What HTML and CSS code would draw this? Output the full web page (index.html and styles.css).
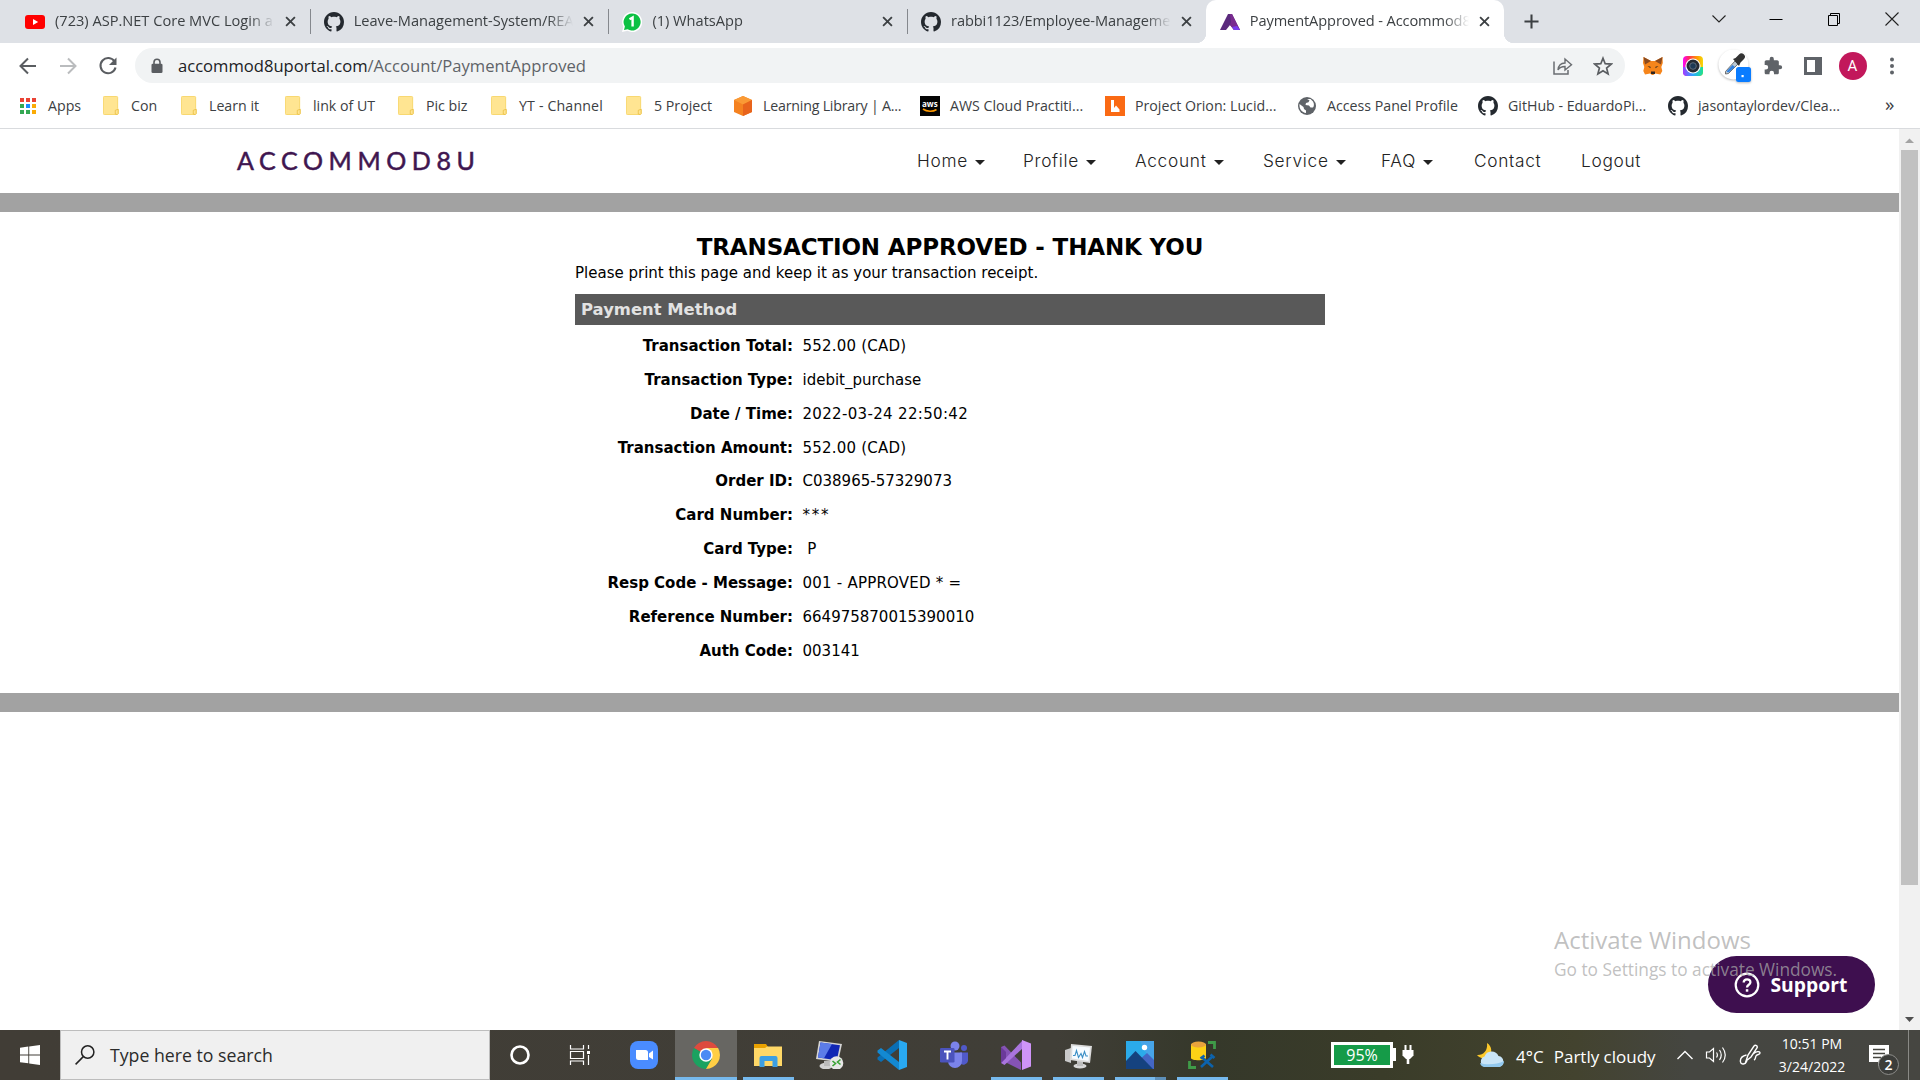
FILE: index.html
```html
<!DOCTYPE html>
<html lang="en">
<head>
<meta charset="utf-8">
<title>PaymentApproved - Accommod8u</title>
<link rel="stylesheet" href="styles.css">
</head>
<body>
<svg class="defs" aria-hidden="true">
  <symbol id="github" viewBox="0 0 16 16"><path fill="#24292f" d="M8 0C3.58 0 0 3.58 0 8c0 3.54 2.29 6.53 5.47 7.59.4.07.55-.17.55-.38 0-.19-.01-.82-.01-1.49-2.01.37-2.53-.49-2.69-.94-.09-.23-.48-.94-.82-1.13-.28-.15-.68-.52-.01-.53.63-.01 1.08.58 1.23.82.72 1.21 1.87.87 2.33.66.07-.52.28-.87.51-1.07-1.78-.2-3.64-.89-3.64-3.95 0-.87.31-1.59.82-2.15-.08-.2-.36-1.02.08-2.12 0 0 .67-.21 2.2.82.64-.18 1.32-.27 2-.27s1.36.09 2 .27c1.53-1.04 2.2-.82 2.2-.82.44 1.1.16 1.92.08 2.12.51.56.82 1.27.82 2.15 0 3.07-1.87 3.75-3.65 3.95.29.25.54.73.54 1.48 0 1.07-.01 1.93-.01 2.2 0 .21.15.46.55.38A8.01 8.01 0 0 0 16 8c0-4.42-3.58-8-8-8z"/></symbol>
  <symbol id="close" viewBox="0 0 12 12"><path d="M1.2 1.2l9.6 9.6M10.8 1.2L1.2 10.8" stroke="#3c4043" stroke-width="2" fill="none"/></symbol>
  <symbol id="folder" viewBox="0 0 16 20"><path d="M1 .5h13a1 1 0 0 1 1 1V13l.5 1v4.500a1 1 0 0 1-1 1H1a1 1 0 0 1-1-1V1.500a1 1 0 0 1 1-1z" fill="#ffe592" stroke="#f8d669"/><path d="M12.500 19v-4l3-1v4.500l-1 1z" fill="#ffe592" stroke="#e9bd3e" stroke-width=".8"/></symbol>
</svg>

<header class="tabs">
  <div class="tab">
    <svg class="fav" viewBox="0 0 20 20"><rect y="3" width="20" height="14" rx="3" fill="#f00"/><path d="M8 7l5.200 3L8 13z" fill="#fff"/></svg>
    <span class="tab-title">(723) ASP.NET Core MVC Login a</span><svg class="x"><use href="#close"/></svg>
  </div>
  <div class="tab">
    <svg class="fav"><use href="#github"/></svg>
    <span class="tab-title">Leave-Management-System/READ</span><svg class="x"><use href="#close"/></svg>
  </div>
  <div class="tab">
    <svg class="fav" viewBox="0 0 20 20"><path d="M10 0a10 10 0 1 1-4.600 18.800L0 20l1.300-5.200A10 10 0 0 1 10 0z" fill="#fff"/><path d="M10 1.500a8.500 8.500 0 1 1-4.400 15.700L2 18l.9-3.500A8.500 8.500 0 0 1 10 1.500z" fill="#0cc143"/><path d="M7.500 7.300L10.600 5.500v9" stroke="#fff" stroke-width="2.400" fill="none"/></svg>
    <span class="tab-title">(1) WhatsApp</span><svg class="x"><use href="#close"/></svg>
  </div>
  <div class="tab">
    <svg class="fav"><use href="#github"/></svg>
    <span class="tab-title tight">rabbi1123/Employee-Managemen</span><svg class="x"><use href="#close"/></svg>
  </div>
  <div class="tab active">
    <svg class="fav" viewBox="0 0 20 20"><path d="M8 2h4l8 16h-6l-4-5-4 5H0z" fill="#5b2a7d"/><path d="M10 2h2l8 16h-6l-4-5 1-3z" fill="#7a2b8f"/><path d="M14 18l-2-3 5-1 3 4z" fill="#7a3cf0"/></svg>
    <span class="tab-title tight">PaymentApproved - Accommod8</span><svg class="x"><use href="#close"/></svg>
  </div>
  <svg class="plus" viewBox="0 0 16 16"><path d="M8 .5v15M.5 8h15" stroke="#3c4043" stroke-width="2.200"/></svg>
  <div class="win">
    <svg viewBox="0 0 16 16"><path d="M1.500 4.500L8 11l6.500-6.500" stroke="#222" stroke-width="1.100" fill="none"/></svg>
    <svg viewBox="0 0 16 16"><path d="M1.500 8.500h13" stroke="#000"/></svg>
    <svg viewBox="0 0 16 16"><path d="M2.500 4.500h9v10h-9zM4.500 4.500v-2h9v10h-2" stroke="#000" fill="none"/></svg>
    <svg viewBox="0 0 16 16"><path d="M1.500 1.500l13 13M14.500 1.500l-13 13" stroke="#222" stroke-width="1.100"/></svg>
  </div>
</header>

<div class="toolbar">
  <svg class="nav-i" viewBox="0 0 20 20"><path d="M18 10H3M10 2.500L2.500 10l7.500 7.500" stroke="#5a5d61" stroke-width="2" fill="none"/></svg>
  <svg class="nav-i" viewBox="0 0 20 20"><path d="M2 10h15M10 2.500l7.500 7.500-7.500 7.500" stroke="#babcbe" stroke-width="2" fill="none"/></svg>
  <svg class="nav-i" viewBox="0 0 20 20"><path d="M16.500 5.500A7.600 7.600 0 1 0 17.500 11.500" stroke="#5a5d61" stroke-width="2.100" fill="none"/><path d="M18.500 1.500v7.500H11z" fill="#5a5d61"/></svg>
  <div class="omni">
    <svg class="lock" viewBox="0 0 12 16"><path d="M3 6V4.200a3 3 0 0 1 6 0V6" stroke="#5a5d61" stroke-width="1.600" fill="none"/><rect x=".5" y="5.800" width="11" height="9.200" rx="1.300" fill="#5a5d61"/></svg>
    <span class="url"><b>accommod8uportal.com</b>/Account/PaymentApproved</span>
    <svg class="omni-i" viewBox="0 0 20 20"><path d="M1 5.500V18h14v-4" stroke="#6a6d71" stroke-width="1.500" fill="none"/><path d="M5 14c.5-5 3-7 7-7V3l6.500 5.700L12 14v-3.500c-3 0-5.500.8-7 3.500z" fill="none" stroke="#6a6d71" stroke-width="1.400"/></svg>
    <svg class="omni-i" viewBox="0 0 20 20"><path d="M10 2.200l2.200 5.500 6 .4-4.600 3.900 1.500 5.900L10 14.700l-5.100 3.200L6.400 12 1.800 8.100l6-.4z" fill="none" stroke="#5a5d61" stroke-width="1.700"/></svg>
  </div>
  <div class="ext">
    <svg viewBox="0 0 20 20"><path d="M.5 1L8 5h4l7.500-4 .3 6-1.500 4 1 4-2 3.500-5-1-2 1.500H9l-2-1.500-5 1L.3 15l1-4L0 7z" fill="#f6851b"/><path d="M.5 1L8 5 2 8.500zM19.500 1L12 5l6 3.500z" fill="#8a4a20"/><path d="M4.500 10l3 .8v1.500zM15.500 10l-3 .8v1.500zM8 15.500h4V18H8z" fill="#30251f"/></svg>
    <svg viewBox="0 0 20 20"><defs><linearGradient id="cg" x2="1"><stop offset="0" stop-color="#f0f"/><stop offset=".3" stop-color="#ff2f55"/><stop offset=".7" stop-color="#ff9a00"/><stop offset="1" stop-color="#f5d90a"/></linearGradient><linearGradient id="cb" x2="1"><stop offset="0" stop-color="#a03cff"/><stop offset=".5" stop-color="#29a8ff"/><stop offset="1" stop-color="#1fe38c"/></linearGradient></defs><rect width="20" height="20" rx="4" fill="url(#cg)"/><path d="M0 11h20v5a4 4 0 0 1-4 4H4a4 4 0 0 1-4-4z" fill="url(#cb)"/><circle cx="10" cy="10" r="7.600" fill="#fff"/><circle cx="10" cy="10" r="6.500" fill="#262b33"/><circle cx="10" cy="10" r="3.300" fill="#1d3a55" stroke="#5d6b7a"/></svg>
    <svg class="drop" viewBox="0 0 34 34"><circle cx="15.500" cy="15.500" r="15" fill="#fff"/><path d="M7.500 22.500L17 12l3 3-9.500 9.500-3 .5z" fill="#b9c8d4" stroke="#555" stroke-width=".8"/><path d="M8.500 22.500l6-6.500 2.500 2-6.500 5.500z" fill="#2f80e0"/><path d="M15 10l2.500-1 3.500-3.500a3.300 3.300 0 0 1 5 4.500L22.500 13.500 21 17z" fill="#333"/><rect x="18" y="18" width="15" height="15" rx="2.500" fill="#0a7cff"/><rect x="23.500" y="26" width="2.200" height="2.200" fill="#fff"/></svg>
    <svg viewBox="0 0 24 24"><path fill="#5f6368" d="M20.500 11H19V7c0-1.100-.9-2-2-2h-4V3.500a2.500 2.500 0 0 0-5 0V5H4c-1.100 0-2 .9-2 2v3.800h1.500a2.700 2.700 0 0 1 0 5.400H2V20c0 1.100.9 2 2 2h3.800v-1.500a2.700 2.700 0 0 1 5.400 0V22H17c1.100 0 2-.9 2-2v-4h1.500a2.500 2.500 0 0 0 0-5z"/></svg>
    <svg viewBox="0 0 20 20"><path d="M1 1h18v18H1z" fill="#5f6368"/><path d="M4 4h8v12H4z" fill="#fff"/></svg>
    <span class="avatar">A</span>
    <svg class="dots" viewBox="0 0 20 20"><g fill="#5f6368"><circle cx="10" cy="3.500" r="2"/><circle cx="10" cy="10" r="2"/><circle cx="10" cy="16.500" r="2"/></g></svg>
  </div>
</div>

<nav class="marks">
  <span><svg class="apps" viewBox="0 0 16 16"><g fill="#ea4335"><path d="M0 0h4v4H0zM6 0h4v4H6zM12 0h4v4h-4z"/></g><path d="M0 6h4v4H0zM0 12h4v4H0zM6 12h4v4H6z" fill="#34a853"/><path d="M6 6h4v4H6z" fill="#1a8cff"/><path d="M12 6h4v4h-4zM12 12h4v4h-4z" fill="#fbab05"/></svg>Apps</span>
  <span><svg class="fold"><use href="#folder"/></svg>Con</span>
  <span><svg class="fold"><use href="#folder"/></svg>Learn it</span>
  <span><svg class="fold"><use href="#folder"/></svg>link of UT</span>
  <span><svg class="fold"><use href="#folder"/></svg>Pic biz</span>
  <span class="yt"><svg class="fold"><use href="#folder"/></svg>YT - Channel</span>
  <span><svg class="fold"><use href="#folder"/></svg>5 Project</span>
  <span class="lib"><svg viewBox="0 0 20 20"><path d="M10 0l9 4v12l-9 4-9-4V4z" fill="#f58220"/><path d="M10 0l9 4-9 4.500L1 4z" fill="#fa9a35"/><path d="M10 8.500L19 4v12l-9 4z" fill="#e8641c"/></svg>Learning Library | A...</span>
  <span><svg viewBox="0 0 20 20"><path d="M0 0h20v20H0z" fill="#050505"/><text x="2" y="10.500" class="aws">aws</text><path d="M3 13c4 3 10 3 13.500.5" stroke="#f90" stroke-width="1.600" fill="none"/></svg>AWS Cloud Practiti...</span>
  <span><svg viewBox="0 0 20 20"><path d="M0 0h20v20H0z" fill="#fa6a14"/><path d="M6 4v12h8.500v-2.500l-3.500-4L9 12V4z" fill="#fff"/></svg>Project Orion: Lucid...</span>
  <span><svg class="globe" viewBox="0 0 18 18"><circle cx="9" cy="9" r="9" fill="#5f6368"/><path d="M1.500 7l4 3 .5 2 2 1.500V16C4 15.500 1 12 1.500 7zM9 2l2.500 1.200-1 2L8 6l-.5 2 3.500.5 1.500 2H15c1-1 1.500-3.500 0-6L12.500 2z" fill="#fff"/></svg>Access Panel Profile</span>
  <span><svg><use href="#github"/></svg>GitHub - EduardoPi...</span>
  <span><svg><use href="#github"/></svg>jasontaylordev/Clea...</span>
  <span class="more">»</span>
</nav>

<div class="viewport">
  <main class="page">
    <div class="site-nav">
      <div class="logo">ACCOMMOD8U</div>
      <ul class="menu">
        <li class="dd">Home</li><li class="dd">Profile</li><li class="dd">Account</li><li class="dd">Service</li><li class="dd">FAQ</li><li>Contact</li><li>Logout</li>
      </ul>
    </div>
    <div class="band"></div>
    <section class="receipt">
      <h1>TRANSACTION APPROVED - THANK YOU</h1>
      <p>Please print this page and keep it as your transaction receipt.</p>
      <h2>Payment Method</h2>
      <dl>
        <dt>Transaction Total:</dt><dd class="wide">552.00 (CAD)</dd>
        <dt>Transaction Type:</dt><dd>idebit_purchase</dd>
        <dt>Date / Time:</dt><dd class="date">2022-03-24 22:50:42</dd>
        <dt>Transaction Amount:</dt><dd class="wide">552.00 (CAD)</dd>
        <dt>Order ID:</dt><dd>C038965-57329073</dd>
        <dt>Card Number:</dt><dd class="stars">***</dd>
        <dt>Card Type:</dt><dd>&nbsp;P</dd>
        <dt>Resp Code - Message:</dt><dd class="wide">001 - APPROVED * =</dd>
        <dt>Reference Number:</dt><dd>664975870015390010</dd>
        <dt>Auth Code:</dt><dd>003141</dd>
      </dl>
    </section>
    <div class="band"></div>
  </main>
  <div class="scroll">
    <svg viewBox="0 0 21 21"><path d="M6 14l4.500-4.500L15 14z" fill="#a3a3a3"/></svg>
    <div class="thumb"></div>
    <svg viewBox="0 0 21 21"><path d="M6 8h9l-4.500 5z" fill="#505050"/></svg>
  </div>
  <div class="support">
    <svg viewBox="0 0 26 26"><circle cx="13" cy="13" r="11.300" fill="none" stroke="#fff" stroke-width="2.200"/><path d="M9.700 10.500c0-4.200 6.700-4.200 6.700-.3 0 2.600-3.400 2.500-3.400 5.300" fill="none" stroke="#fff" stroke-width="2.300"/><rect x="11.800" y="17.200" width="2.500" height="2.500" fill="#fff"/></svg>
    Support
  </div>
  <div class="watermark"><div>Activate Windows</div><p>Go to Settings to activate Windows.</p></div>
</div>

<footer class="taskbar">
  <div class="start"><svg viewBox="0 0 20 20"><path d="M0 2.800L8.300 1.600v7.900H0zM9.200 1.500L20 0v9.500H9.200zM0 10.400h8.300v7.900L0 17.200zM9.200 10.400H20V20L9.200 18.500z" fill="#fff"/></svg></div>
  <div class="search"><svg viewBox="0 0 20 20"><circle cx="12.700" cy="7" r="6.200" fill="none" stroke="#222" stroke-width="1.500"/><path d="M8.300 11.600L.6 19.400" stroke="#222" stroke-width="1.500"/></svg>Type here to search</div>
  <div class="sys">
    <svg viewBox="0 0 28 28"><circle cx="14" cy="14" r="8.500" fill="none" stroke="#fff" stroke-width="2.600"/></svg>
    <svg viewBox="0 0 28 28"><path d="M4.500 4v4h13V4M4.500 24v-4h13v4M4.500 10.500h13v7h-13z" fill="none" stroke="#fff" stroke-width="1.200"/><path d="M22.500 4v4M22.500 14v10" stroke="#fff" stroke-width="1.200"/><path d="M21 10h3v3h-3z" fill="#fff"/></svg>
  </div>
  <div class="apps-row">
    <div><svg viewBox="0 0 28 28"><rect width="28" height="28" rx="8" fill="#4a8cff"/><path d="M6 9h9.500a2.500 2.500 0 0 1 2.500 2.500V19H8.500A2.500 2.500 0 0 1 6 16.500zM19 12.500L23 9.500v9L19 16z" fill="#fff"/></svg></div>
    <div class="on focus"><svg viewBox="0 0 28 28"><path d="M14 14L1.900 7A14 14 0 0 1 26.100 7z" fill="#dd4b3e"/><path d="M14 14L1.900 7A14 14 0 0 0 14 28l6-10.500z" fill="#1ba260"/><path d="M14 7h12.100A14 14 0 0 1 14 28l6.100-10.500z" fill="#ffce44"/><circle cx="14" cy="14" r="6.700" fill="#fff"/><circle cx="14" cy="14" r="5.200" fill="#4a8af4"/></svg></div>
    <div class="on"><svg viewBox="0 0 28 28"><path d="M0 3h12l2 3v5H0z" fill="#e9a100"/><path d="M0 7h11l2-1.500h15V25H0z" fill="#ffd867"/><path d="M5.500 26V17a2 2 0 0 1 2-2h14a2 2 0 0 1 2 2v9h-5v-6h-8v6z" fill="#3c9fe3"/></svg></div>
    <div><svg viewBox="0 0 28 28"><ellipse cx="10" cy="25" rx="6.500" ry="3.300" fill="#d2d2d2"/><path d="M8 20h6v5H8z" fill="#bbb"/><path d="M3 0l23 3-4 18L0 18z" fill="#d5d5d5"/><path d="M4.500 1.500L24 4.200l-3.200 15L2 16.500z" fill="#1026b5"/><path d="M4.500 1.500L16 3 8 17.200l-6-.7z" fill="#5c7ce8"/><circle cx="20.500" cy="22" r="6.800" fill="#e7e7e7"/><path d="M16.500 20l3 2.500-3 2.500M24.500 18.500l-3 2.500 3 2.500" stroke="#3aa335" stroke-width="1.600" fill="none"/></svg></div>
    <div><svg class="big" viewBox="0 0 30 30"><path d="M22 0l8 3v24l-8 3z" fill="#29a9f2"/><path d="M22 0v8L4 22l-3.500-2.500v-2z" fill="#0a6fb5"/><path d="M22 30v-8L4 8 .5 10.500v2z" fill="#1389d2"/></svg></div>
    <div><svg viewBox="0 0 28 28"><circle cx="15" cy="5" r="4.500" fill="#7b83eb"/><circle cx="24" cy="7" r="3" fill="#5059c9"/><path d="M20 11.500h8V20a4.500 4.500 0 0 1-8 2z" fill="#5059c9"/><path d="M8 11.500h14V20a7 7 0 0 1-14 0z" fill="#7b83eb"/><rect y="7" width="14.500" height="14.500" rx="1.300" fill="#4b53bc"/><path d="M4 10.500h7M7.500 10.500v8" stroke="#fff" stroke-width="1.900"/></svg></div>
    <div class="on"><svg class="big" viewBox="0 0 30 30"><path d="M0 7l3.500-1.500L20 22.500V30L4 22 0 23z" fill="#8553b5"/><path d="M0 23l3.500 2L22 8V0z" fill="#a975dd"/><path d="M0 7v16l5-5v-6z" fill="#6b3a9a"/><path d="M21 0l9 3.500v23L21 30z" fill="#cf94f8"/></svg></div>
    <div class="on"><svg viewBox="0 0 28 28"><path d="M1 9l6-2v15l-6-2z" fill="#c9c9c9"/><ellipse cx="16" cy="25" rx="6.500" ry="2.500" fill="#d8d8d8"/><path d="M13 20h6v5h-6z" fill="#bdbdbd"/><path d="M7 3l21 2-2 17-20-3z" fill="#dcdcdc"/><path d="M8.500 5l17.500 1.500L24.500 20 8 17.500z" fill="#f6fbff"/><path d="M9 14.500h2l1.500-5 2 7 2.500-4 1.500 4 2-6 1.500 4.500h2" stroke="#3b8fc6" stroke-width="1.100" fill="none"/></svg></div>
    <div class="on multi"><svg viewBox="0 0 28 28"><path d="M0 0h28v28H0z" fill="#2babea"/><path d="M14 0h14v28z" fill="#5aa2e8" opacity=".6"/><path d="M12 20l9-8 7 7v9H12z" fill="#4466c4"/><path d="M0 20L9.500 10 27 28H0z" fill="#15427f"/><circle cx="18.500" cy="6.500" r="2.700" fill="#fff"/></svg></div>
    <div class="on"><svg viewBox="0 0 28 28"><path d="M3 3v14c0 3 15 3 15 0V3z" fill="#fcd116"/><ellipse cx="10.500" cy="3.500" rx="7.500" ry="3" fill="#e8a33d"/><path d="M20 1.500h6.500V8M1.500 20v6.500H8" stroke="#3f9b48" stroke-width="2.800" fill="none"/><path d="M13 26l12-11M14 16.500L25 26M12.500 17.500l4-3M22.500 13.500l4 3.500" stroke="#0c63ad" stroke-width="2.600" fill="none"/></svg></div>
  </div>
  <div class="tray">
    <span class="batt">95%</span>
    <svg class="plug" viewBox="0 0 12 22"><path d="M3.500 1v6M8.500 1v6" stroke="#fff" stroke-width="2"/><path d="M.5 6h11v5.500L8 15H4L.5 11.500z" fill="#fff"/><path d="M6 14v6" stroke="#fff" stroke-width="2.600"/></svg>
    <svg class="cloud" viewBox="0 0 28 26"><path d="M10 1c5 3 6 10 1 14-4 2.500-9 1-11-2 6 .5 11-4 10-12z" fill="#fdc92b"/><path d="M8 25a5.500 5.500 0 0 1-.5-10.500 7.500 7.500 0 0 1 14-.5A5.600 5.600 0 0 1 22 25z" fill="#c9e5f8"/><path d="M8 25a5.500 5.500 0 0 1-5-4c5 2 17 2 24-2a5.600 5.600 0 0 1-5 6z" fill="#93c9ee"/></svg>
    <span class="weather"><span>4°C</span><span>Partly cloudy</span></span>
    <svg class="up" viewBox="0 0 18 18"><path d="M1.500 13L9 5.500l7.500 7.500" stroke="#fff" stroke-width="1.400" fill="none"/></svg>
    <svg class="vol" viewBox="0 0 22 20"><path d="M1.500 7h3L8.500 3.500v13L4.500 13h-3z" fill="none" stroke="#fff" stroke-width="1.200"/><path d="M11.500 7.500q1.800 2.500 0 5M14.500 5q3.500 5 0 10M17.500 2.500q5.500 7.500 0 15" fill="none" stroke="#fff" stroke-width="1.200"/></svg>
    <svg class="pen" viewBox="0 0 22 22"><path d="M7 17L9 11l6-9c1.500-1.500 4 0 3 2l-6 9-5 4zM7.500 11C3 12 1 15 1.500 18s5 2.500 6.500-1M14 10c3-3 7-3 7-1s-3 1-4 3 0 3-2 4" fill="none" stroke="#fff" stroke-width="1.400"/></svg>
    <span class="clock">10:51 PM<br>3/24/2022</span>
    <svg class="note" viewBox="0 0 30 34"><path d="M0 2h20v17h-7l-4 4v-4H0z" fill="#fff"/><path d="M4 6.500h12M4 10.500h12M4 14.500h8" stroke="#45453f" stroke-width="1.300"/><circle cx="19.500" cy="21.500" r="10" fill="#3c3d3a" stroke="#8d8d8a"/><text x="15.500" y="26.500">2</text></svg>
  </div>
</footer>
</body>
</html>
```
FILE: styles.css
```css
* { box-sizing: border-box; margin: 0; padding: 0; }
body { width: 1920px; height: 1080px; overflow: hidden; display: flex; flex-direction: column; background: #fff; font-family: "Open Sans", sans-serif; color: #3c4043; }
svg { display: block; flex: none; }
.defs { display: none; }

/* tab strip */
.tabs { height: 43px; background: #dee1e6; display: flex; align-items: center; padding-left: 11px; }
.tab { width: 298.7px; height: 43px; padding: 0 14px; display: flex; align-items: center; font-size: 14.6px; position: relative; }
.tab:nth-child(-n+3)::after { content: ""; position: absolute; right: -1px; top: 9px; width: 1px; height: 25px; background: #85888d; }
.fav { width: 20px; height: 20px; margin-right: 10px; }
.tab-title { width: 220px; height: 26px; line-height: 22px; white-space: nowrap; overflow: hidden; -webkit-mask-image: linear-gradient(90deg, #000 194px, transparent); mask-image: linear-gradient(90deg, #000 194px, transparent); }
.tight { letter-spacing: -.1px; }
.x { width: 11px; height: 11px; margin-left: 10px; }
.active { background: #fff; border-radius: 10px 10px 0 0; }
.active::before { content: ""; position: absolute; left: -10px; bottom: 0; width: 10px; height: 10px; background: radial-gradient(circle at 0 0, transparent 10px, #fff 10.5px); }
.active::after { content: ""; position: absolute; right: -10px; bottom: 0; width: 10px; height: 10px; background: radial-gradient(circle at 100% 0, transparent 10px, #fff 10.5px); }
.plus { width: 15px; height: 15px; margin-left: 20px; }
.win { margin-left: auto; display: flex; gap: 41.6px; padding: 0 20.500px 6px 0; }
.win svg { width: 16px; height: 16px; }

/* toolbar */
.toolbar { height: 45px; display: flex; align-items: center; padding-left: 18px; }
.nav-i { width: 20px; height: 20px; margin-right: 20px; }
.omni { width: 1490px; height: 35px; margin-left: -3px; border-radius: 18px; background: #f1f3f4; display: flex; align-items: center; padding: 0 12px 0 16px; }
.lock { width: 12px; height: 16px; margin-right: 15px; }
.url { flex: 1; font-size: 16.6px; color: #5f6368; }
.url b { font-weight: 400; color: #202124; }
.omni-i { width: 20px; height: 20px; margin-left: 20px; }
.ext { display: flex; align-items: center; gap: 20px; padding-left: 17.500px; }
.ext svg { width: 20px; height: 20px; }
.ext .drop { width: 34px; height: 34px; margin: 0 -9px 0 -5px; filter: drop-shadow(0 1px 1px #0004); }
.ext .avatar { width: 28px; height: 28px; border-radius: 50%; background: #c2185b; color: #fff; font: 15px/28px Roboto, sans-serif; text-align: center; margin: 0 -4px 0 -4px; }
.ext .dots { margin-left: -1px; }

/* bookmarks */
.marks { height: 41px; border-bottom: 1px solid #d9dbde; padding: 0 0 5px 20px; display: grid; align-items: center; font-size: 14.2px; grid-template-columns: 83px 78px 104px 113px 93px 135px 107px 187px 185px 193px 180px 190px 215px auto; }
.marks span { display: flex; align-items: center; white-space: nowrap; }
.marks svg { width: 20px; height: 20px; margin-right: 10px; }
.marks .apps { width: 16px; height: 16px; margin-right: 12px; }
.marks .fold { width: 16px; height: 19px; margin-right: 12px; }
.marks .globe { width: 18px; height: 18px; margin-right: 11px; }
.marks .yt { letter-spacing: .15px; }
.marks .lib { letter-spacing: -.2px; }
.marks .more { font-size: 19px; padding: 0 0 3px 2px; }
.aws { font: 700 8px "Open Sans", sans-serif; fill: #fff; letter-spacing: 0; }

/* web page */
.viewport { height: 901px; display: flex; position: relative; }
.page { flex: 1; background: #fff; }
.site-nav { height: 64px; display: flex; padding-left: 237px; }
.logo { width: 680px; font: 25px/63px Lato, sans-serif; letter-spacing: 5.600px; color: #3f1650; -webkit-text-stroke: .5px #3f1650; }
.menu { list-style: none; display: grid; grid-template-columns: 106px 112px 128px 118px 93px 107px 80px; font: 300 17.300px/64px Inter, sans-serif; letter-spacing: .7px; color: #222; }
.dd::after { content: ""; display: inline-block; border: 5px solid transparent; border-top-color: #222; border-bottom: 0; margin-left: 7px; vertical-align: 2.500px; }
.band { height: 19px; background: #a2a2a2; }
.receipt { width: 750px; height: 481px; margin-left: 575px; padding-top: 21px; color: #000; font: 15px "DejaVu Sans", sans-serif; }
.receipt h1 { font-size: 23px; line-height: 28px; letter-spacing: -.14px; text-align: center; }
.receipt p { line-height: 25px; white-space: nowrap; }
.receipt h2 { margin: 8px 0; height: 31px; padding-left: 6px; background: #595959; color: #e2e2e2; font-size: 16.4px; line-height: 32px; }
.receipt dl { display: grid; grid-template-columns: 218px auto; column-gap: 9.500px; grid-auto-rows: 33.850px; line-height: 27px; }
.receipt dt { font-weight: 700; text-align: right; }
.receipt .date { letter-spacing: .33px; }
.receipt .wide { letter-spacing: .22px; }
.receipt .stars { letter-spacing: 1.700px; }
.scroll { width: 21px; background: #f1f1f1; display: flex; flex-direction: column; }
.scroll svg { width: 21px; height: 21px; }
.thumb { height: 735px; margin: 0 2px 124px; background: #c1c1c1; }
.support { position: absolute; left: 1708px; top: 827px; width: 167px; height: 57px; border-radius: 29px; background: #3e0f4f; color: #fff; font: 700 19.300px "Open Sans", sans-serif; display: flex; align-items: center; padding-left: 26px; gap: 10.500px; }
.support svg { width: 26px; height: 26px; }
.watermark { position: absolute; left: 1554px; top: 794px; color: #a9a9a9bb; white-space: nowrap; }
.watermark div { font-size: 24px; line-height: 33px; }
.watermark p { font-size: 17.300px; line-height: 27px; }

/* taskbar */
.taskbar { height: 50px; display: flex; color: #fff; background: linear-gradient(90deg, #413d36 0, #403e37 55%, #35382a 63%, #3a3c29 72%, #43432f 82%, #454641 88%, #464641 100%); }
.start { width: 60px; padding: 15px 0 0 20px; }
.start svg { width: 20px; height: 20px; }
.search { width: 430px; background: #f0f0f0; border: 1px solid #bdbdbd; display: flex; align-items: center; padding-left: 14px; gap: 15px; font-size: 17.700px; color: #2b2b2b; }
.search svg { width: 20px; height: 20px; }
.sys { display: flex; gap: 32px; padding: 11px 0 0 16px; width: 123px; }
.sys svg { width: 28px; height: 28px; }
.apps-row { display: flex; }
.apps-row div { width: 62px; height: 50px; display: flex; align-items: center; justify-content: center; position: relative; }
.apps-row svg { width: 28px; height: 28px; }
.apps-row .big { width: 30px; height: 30px; }
.on::after { content: ""; position: absolute; left: 6px; right: 5px; bottom: 0; height: 3px; background: #76b9ed; }
.focus { background: #676662; }
.focus::after { left: 0; right: 0; }
.multi::after { background: linear-gradient(90deg, #76b9ed 40px, #5d8fb8 40px); }
.tray { flex: 1; display: flex; align-items: center; padding-left: 98px; }
.batt { width: 62px; height: 26px; border: 3px solid #fff; background: #159b48; font-size: 16px; line-height: 20px; text-align: center; position: relative; }
.batt::after { content: ""; position: absolute; right: -6px; top: 3px; width: 3px; height: 13px; background: #fff; }
.plug { width: 12px; height: 22px; margin-left: 9px; }
.cloud { width: 28px; height: 26px; margin: 0 11px 0 63px; }
.weather { display: flex; gap: 10px; font-size: 17px; width: 160px; white-space: nowrap; padding-top: 2px; }
.up { width: 18px; height: 18px; }
.vol { width: 22px; height: 20px; margin-left: 11px; }
.pen { width: 22px; height: 22px; margin-left: 12px; }
.clock { width: 84px; margin-left: 9px; font-size: 14px; line-height: 23px; text-align: center; padding-bottom: 1px; }
.note { width: 30px; height: 34px; margin: 10px 9px 0 15px; }
.note text { font: 600 14px "Open Sans", sans-serif; fill: #fff; }
.tray::after { content: ""; width: 1px; height: 50px; background: #8a8a86; }
```
